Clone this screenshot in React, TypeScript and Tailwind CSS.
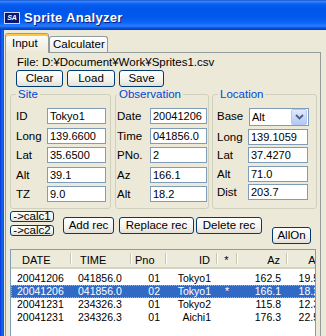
import * as React from "react"

type Rec = {
  date: string
  time: string
  pno: string
  id: string
  mark: string
  az: string
  al: string
  selected?: boolean
}

const records: Rec[] = [
  { date: "20041206", time: "041856.0", pno: "01", id: "Tokyo1", mark: "", az: "162.5", al: "19.5" },
  { date: "20041206", time: "041856.0", pno: "02", id: "Tokyo1", mark: "*", az: "166.1", al: "18.2", selected: true },
  { date: "20041231", time: "234326.3", pno: "01", id: "Tokyo2", mark: "", az: "115.8", al: "12.3" },
  { date: "20041231", time: "234326.3", pno: "01", id: "Aichi1", mark: "", az: "176.3", al: "22.5" },
]

const columns: { title: string; key: keyof Rec; width: string; head: string; cell: string }[] = [
  { title: "DATE", key: "date", width: "w-[60px]", head: "justify-start pl-[11px]", cell: "justify-start pl-[6px]" },
  { title: "TIME", key: "time", width: "w-[60px]", head: "justify-start pl-[9px]", cell: "justify-start pl-[7px]" },
  { title: "Pno", key: "pno", width: "w-[35px]", head: "justify-start pl-[4px]", cell: "justify-end pr-[6px]" },
  { title: "ID", key: "id", width: "w-[51px]", head: "justify-end pr-[6px]", cell: "justify-end pr-[6px]" },
  { title: "*", key: "mark", width: "w-[20px]", head: "justify-center", cell: "justify-center" },
  { title: "Az", key: "az", width: "w-[50px]", head: "justify-end pr-[6px]", cell: "justify-end pr-[6px]" },
  { title: "Al", key: "al", width: "w-[38px]", head: "justify-end pr-[6px]", cell: "justify-end pr-[6px]" },
]

const btn =
  "flex shrink-0 items-center justify-center rounded-[3px] border border-[#003C74] bg-[linear-gradient(180deg,#ffffff_0%,#f5f4ef_55%,#e2e0d6_100%)] leading-none text-black"

const box = "h-[16px] border border-[#7F9DB9] bg-white pl-[2px] text-[11px] leading-[14px] outline-none"

function GroupBox({
  title,
  legend,
  className,
  children,
}: {
  title: string
  legend: string
  className: string
  children: React.ReactNode
}) {
  return (
    <fieldset className={`shrink-0 rounded-[3px] border border-[#D0D0BF] ${className}`}>
      <legend className={`px-[2px] text-[11.5px] leading-[13px] text-[#0046D5] ${legend}`}>{title}</legend>
      {children}
    </fieldset>
  )
}

function Field({ label, value, labelW, inputW }: { label: string; value: string; labelW: string; inputW: string }) {
  return (
    <div className="flex h-[16px] items-center">
      <span className={`shrink-0 leading-[16px] ${labelW}`}>{label}</span>
      <input readOnly value={value} className={`${box} ${inputW}`} />
    </div>
  )
}

export default function App() {
  return (
    <div className="flex h-[336px] w-[326px] flex-col overflow-hidden bg-[#ECE9D8] font-['Liberation_Sans',Arial,sans-serif] text-[11.5px] text-black">
      {/* title bar */}
      <div className="flex h-[30px] shrink-0 items-center bg-[linear-gradient(180deg,#0a3bb8_0px,#3d8eff_1px,#0a5ef0_4px,#0056ea_9px,#0058ee_17px,#0d66f6_23px,#2a7eff_26px,#0a52dc_28px,#003dbd_30px)] pl-[4px] pt-[5px]">
        <div className="flex h-[12px] w-[16px] items-center justify-center border border-[#cfd8ff] bg-[#0b1670] text-[7px] font-bold italic leading-none text-white">
          SA
        </div>
        <span className="ml-[4px] text-[13px] font-bold tracking-[0.3px] text-white [text-shadow:1px_1px_0_#0a1e7f]">
          Sprite Analyzer
        </span>
      </div>

      <div className="flex min-h-0 flex-1">
        <div className="w-[4px] shrink-0 bg-[linear-gradient(90deg,#0831d9,#166aee_50%,#0855dd)]" />

        <div className="flex flex-1 flex-col pl-[1px]">
          {/* tabs */}
          <div className="flex h-[22px] shrink-0 items-end pt-[3px]">
            <div className="relative z-10 -mb-px flex h-[20px] w-[44px] items-center rounded-t-[3px] border-x border-t border-x-[#919B9C] border-t-[#E68B2C] bg-[linear-gradient(180deg,#fdfdfc,#ECE9D8)] pl-[6px] shadow-[inset_0_2px_0_#FFC73C]">
              Input
            </div>
            <div className="flex h-[16px] w-[59px] items-center rounded-t-[3px] border-x border-t border-[#919B9C] bg-[linear-gradient(180deg,#ffffff,#ecebe5)] pl-[3px]">
              Calculater
            </div>
          </div>

          {/* panel */}
          <div className="h-[300px] w-[316px] shrink-0 border border-[#919B9C] bg-[#ECE9D8] pl-[4px] pt-[3px]">
            <div className="ml-[7px] h-[13px] leading-[13px]">File: D:¥Document¥Work¥Sprites1.csv</div>

            <div className="ml-[6px] mt-[1px] flex gap-[4px]">
              <button className={`${btn} h-[17px] w-[47px]`}>Clear</button>
              <button className={`${btn} h-[17px] w-[48px]`}>Load</button>
              <button className={`${btn} h-[17px] w-[45px]`}>Save</button>
            </div>

            <div className="mt-[1px] flex">
              <GroupBox title="Site" legend="ml-[5px]" className="w-[101px]">
                <div className="flex flex-col gap-[3.5px] pb-[6px] pl-[5px] pt-[7px]">
                  <Field label="ID" value="Tokyo1" labelW="w-[31px]" inputW="w-[59px]" />
                  <Field label="Long" value="139.6600" labelW="w-[31px]" inputW="w-[59px]" />
                  <Field label="Lat" value="35.6500" labelW="w-[31px]" inputW="w-[59px]" />
                  <Field label="Alt" value="39.1" labelW="w-[31px]" inputW="w-[59px]" />
                  <Field label="TZ" value="9.0" labelW="w-[31px]" inputW="w-[59px]" />
                </div>
              </GroupBox>

              <GroupBox title="Observation" legend="ml-[1px]" className="ml-[4px] w-[94px]">
                <div className="flex flex-col gap-[3.5px] pb-[6px] pl-[1px] pt-[7px]">
                  <Field label="Date" value="20041206" labelW="w-[33px]" inputW="w-[57px]" />
                  <Field label="Time" value="041856.0" labelW="w-[33px]" inputW="w-[57px]" />
                  <Field label="PNo." value="2" labelW="w-[33px]" inputW="w-[57px]" />
                  <Field label="Az" value="166.1" labelW="w-[33px]" inputW="w-[57px]" />
                  <Field label="Alt" value="18.2" labelW="w-[33px]" inputW="w-[57px]" />
                </div>
              </GroupBox>

              <GroupBox title="Location" legend="ml-[5px]" className="ml-[3px] w-[105px]">
                <div className="flex flex-col gap-[2.5px] pb-[6px] pl-[4px] pt-[7px]">
                  <div className="flex h-[18px] items-center">
                    <span className="w-[32px] shrink-0">Base</span>
                    <div className="flex h-[18px] w-[60px] items-center border border-[#7F9DB9] bg-white">
                      <span className="flex-1 pl-[2px] text-[11px]">Alt</span>
                      <div className="mr-px flex h-[16px] w-[16px] items-center justify-center rounded-[2px] border border-[#B4C8F6] bg-[linear-gradient(180deg,#E1EAFE,#B3C8F7)]">
                        <svg width="9" height="6" viewBox="0 0 9 6">
                          <path d="M1 1l3.5 3.5L8 1" stroke="#4D6185" strokeWidth="1.8" fill="none" />
                        </svg>
                      </div>
                    </div>
                  </div>
                  <Field label="Long" value="139.1059" labelW="w-[31px]" inputW="w-[60px]" />
                  <Field label="Lat" value="37.4270" labelW="w-[31px]" inputW="w-[60px]" />
                  <Field label="Alt" value="71.0" labelW="w-[31px]" inputW="w-[60px]" />
                  <Field label="Dist" value="203.7" labelW="w-[31px]" inputW="w-[60px]" />
                </div>
              </GroupBox>
            </div>

            {/* record buttons */}
            <div className="flex h-[35px] items-start">
              <div className="flex flex-col gap-[3px] pt-[2px]">
                <button className={`${btn} h-[11px] w-[44px]`}>-&gt;calc1</button>
                <button className={`${btn} h-[11px] w-[44px]`}>-&gt;calc2</button>
              </div>
              <button className={`${btn} ml-[9px] mt-[8px] h-[17px] w-[51px]`}>Add rec</button>
              <button className={`${btn} ml-[5px] mt-[8px] h-[17px] w-[75px]`}>Replace rec</button>
              <button className={`${btn} ml-[2px] mt-[8px] h-[17px] w-[66px]`}>Delete rec</button>
              <button className={`${btn} ml-[10px] mt-[18px] h-[17px] w-[39px]`}>AllOn</button>
            </div>

            {/* list view */}
            <div className="mt-[5px] h-[100px] w-[306px] overflow-hidden border border-[#7F9DB9] bg-white">
              <div className="flex h-[19px] border-b-2 border-[#D6D2C2] bg-[#EBEADB] text-[11px]">
                {columns.map((c) => (
                  <div key={c.key} className={`flex shrink-0 ${c.width}`}>
                    <div className={`flex flex-1 items-center whitespace-nowrap pt-[3px] ${c.cell === c.head ? c.head : c.head}`}>
                      {c.title}
                    </div>
                    <div className="my-[3px] w-px shrink-0 bg-[#C7C5B2] shadow-[1px_0_0_#ffffff]" />
                  </div>
                ))}
              </div>
              <div className="pt-[3px] text-[10.5px] leading-[13px]">
                {records.map((r, i) => (
                  <div
                    key={i}
                    className={`flex h-[13px] ${
                      r.selected
                        ? "bg-[#316AC5] text-white outline-1 -outline-offset-1 outline-dotted outline-[#E8A844]"
                        : ""
                    }`}
                  >
                    {columns.map((c) => (
                      <div key={c.key} className={`flex shrink-0 whitespace-nowrap ${c.width} ${c.cell}`}>
                        {r[c.key] as string}
                      </div>
                    ))}
                  </div>
                ))}
              </div>
            </div>
          </div>
        </div>
      </div>
    </div>
  )
}
